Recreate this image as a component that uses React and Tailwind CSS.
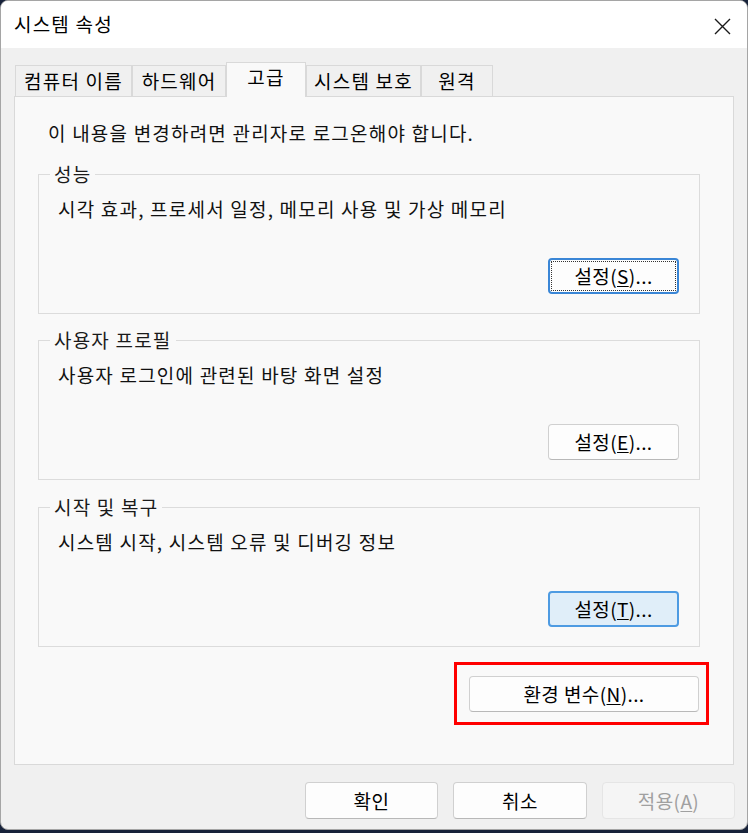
const FONT = "font-['Noto_Sans_CJK_KR','Noto_Sans',sans-serif]";
const TXT = "text-[19px] leading-[24px] tracking-[1.2px]";

function Btn({ children, className = "", w = "w-[131px]" }) {
  return (
    <div
      className={`${w} h-[36px] flex items-center justify-center rounded-[4px] text-[19px] leading-[24px] tracking-[0.4px] ${className}`}
    >
      {children}
    </div>
  );
}

function Group({ title, desc, button, mt }) {
  return (
    <fieldset className={`${mt} ml-[23px] mr-[33px] border border-[#dcdcdc] px-[19px] pb-[19px]`}>
      <legend className={`ml-[-8px] px-[4px] ${TXT} text-[#1a1a1a]`}>{title}</legend>
      <div className={`mt-[11px] ${TXT} text-[#111]`}>{desc}</div>
      <div className="mt-[37px] flex justify-end mr-[1px]">{button}</div>
    </fieldset>
  );
}

function Tab({ label, w, active }) {
  if (active) {
    return (
      <div
        className={`${w} h-[35px] -mb-px relative z-10 bg-[#f9f9f9] border-x border-t border-[#d9d9d9] flex justify-center pt-[2px] ${TXT}`}
      >
        {label}
      </div>
    );
  }
  return (
    <div
      className={`${w} h-[31px] bg-[#f0f0f0] border-x border-t border-[#d9d9d9] flex items-center justify-center ${TXT}`}
    >
      {label}
    </div>
  );
}

export default function App() {
  return (
    <div className={`w-[748px] h-[833px] bg-[#17223a] ${FONT} text-black`}>
      <div className="w-[748px] h-[830px] rounded-[8px] overflow-hidden border border-[#a5a5a5] bg-[#f0f0f0] flex flex-col">
        {/* title bar */}
        <div className="h-[47px] bg-white flex items-center justify-between pl-[13px] pr-[16px]">
          <span className={`${TXT} -mt-[2px]`}>시스템 속성</span>
          <svg width="17" height="17" viewBox="0 0 17 17" className="mt-[4px]">
            <path d="M1 1 L16 16 M16 1 L1 16" stroke="#1a1a1a" strokeWidth="1.4" fill="none" />
          </svg>
        </div>

        {/* body */}
        <div className="flex-1 px-[13px] pt-[14px]">
          <div className="flex items-end h-[34px] pl-[1px]">
            <Tab label="컴퓨터 이름" w="w-[117px]" />
            <Tab label="하드웨어" w="w-[94px]" />
            <Tab label="고급" w="w-[80px]" active />
            <Tab label="시스템 보호" w="w-[115px]" />
            <Tab label="원격" w="w-[72px]" />
          </div>

          <div className="relative h-[669px] border border-[#d9d9d9] bg-[#f9f9f9] flex flex-col">
            <div className={`pt-[24px] pl-[33px] ${TXT} text-[#111]`}>
              이 내용을 변경하려면 관리자로 로그온해야 합니다.
            </div>

            <Group
              mt="mt-[17px]"
              title="성능"
              desc="시각 효과, 프로세서 일정, 메모리 사용 및 가상 메모리"
              button={
                <Btn className="bg-[#fdfdfd] border-2 border-[#3a86d6] outline-dotted outline-1 -outline-offset-4 outline-[#333]">
                  설정(<span className="underline underline-offset-2">S</span>)...
                </Btn>
              }
            />
            <Group
              mt="mt-[14px]"
              title="사용자 프로필"
              desc="사용자 로그인에 관련된 바탕 화면 설정"
              button={
                <Btn className="bg-[#fdfdfd] border border-[#d0d0d0] border-b-[#b8b8b8]">
                  설정(<span className="underline underline-offset-2">E</span>)...
                </Btn>
              }
            />
            <Group
              mt="mt-[15px]"
              title="시작 및 복구"
              desc="시스템 시작, 시스템 오류 및 디버깅 정보"
              button={
                <Btn className="bg-[#e0eef9] border-2 border-[#4e9be2]">
                  설정(<span className="underline underline-offset-2">T</span>)...
                </Btn>
              }
            />

            <div className="mt-[29px] flex justify-end pr-[34px]">
              <div className="relative">
                <Btn w="w-[230px]" className="bg-[#fdfdfd] border border-[#d0d0d0] border-b-[#b8b8b8]">
                  환경 변수(<span className="underline underline-offset-2">N</span>)...
                </Btn>
                <div className="absolute -left-[15px] -right-[10px] -top-[14px] -bottom-[13px] border-[3px] border-[#ff0000] pointer-events-none" />
              </div>
            </div>
          </div>

          <div className="mt-[17px] -mr-px flex justify-end gap-[15px]">
            <Btn w="w-[133px]" className="h-[37px] bg-[#fdfdfd] border border-[#d0d0d0] border-b-[#b8b8b8]">
              확인
            </Btn>
            <Btn w="w-[134px]" className="h-[37px] bg-[#fdfdfd] border border-[#d0d0d0] border-b-[#b8b8b8]">
              취소
            </Btn>
            <Btn w="w-[133px]" className="h-[37px] bg-[#f5f5f5] border border-[#e5e5e5] text-[#a0a0a0]">
              적용(<span className="underline underline-offset-2">A</span>)
            </Btn>
          </div>
        </div>
      </div>
    </div>
  );
}
